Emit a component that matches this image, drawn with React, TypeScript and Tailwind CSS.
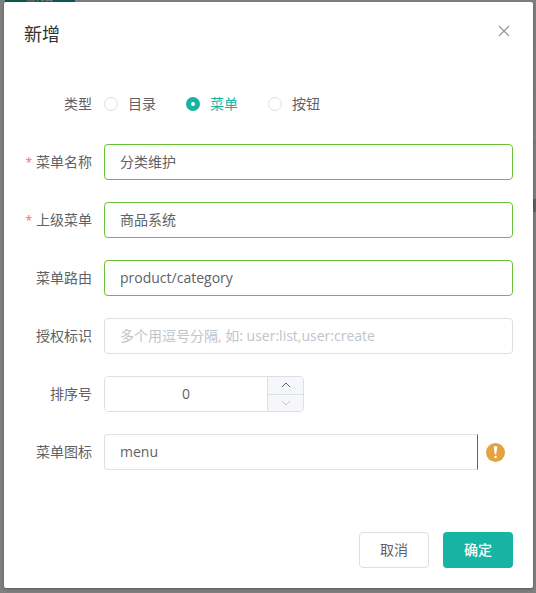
import { useState } from "react";
import type { ReactNode } from "react";

const FIELD =
  "h-9 w-full min-w-0 border bg-white px-[15px] pb-[2px] text-sm text-[#606266] outline-none placeholder:text-[#c0c4cc]";

function Row({ label, id, required, children }: { label: string; id: string; required?: boolean; children: ReactNode }) {
  return (
    <div className="flex items-center">
      <label htmlFor={id} className="w-20 shrink-0 pr-3 text-right leading-9 whitespace-nowrap">
        {required && <span className="mr-1 text-xs text-[#f56c6c]">*</span>}
        {label}
      </label>
      <div className="flex h-9 min-w-0 flex-1 items-center">{children}</div>
    </div>
  );
}

function Chevron({ down }: { down?: boolean }) {
  return (
    <svg width="10" height="6" viewBox="0 0 10 6" fill="none" stroke="currentColor" strokeWidth="1" aria-hidden="true">
      <path d={down ? "M1 1l4 4 4-4" : "M1 5l4-4 4 4"} />
    </svg>
  );
}

function Backdrop() {
  return (
    <div aria-hidden="true" className="absolute inset-0 overflow-hidden bg-[#7f7f7f]">
      <div className="absolute -top-[21px] left-[5px] h-9 w-[70px] rounded bg-[#0b5a52] text-center leading-9 text-[#7f7f7f]">
        新增
      </div>
      <div className="absolute top-[46px] right-0 h-px w-4 bg-[#757677]" />
      <div className="absolute top-[91px] right-0 h-px w-4 bg-[#757677]" />
      <div className="absolute top-[143px] right-0 h-px w-4 bg-[#757677]" />
      <div className="absolute top-[199px] right-0 h-[13px] w-4 bg-[#606060]" />
    </div>
  );
}

export default function App() {
  const [kind, setKind] = useState("菜单");
  const [order, setOrder] = useState(0);

  return (
    <div className="relative min-h-screen pt-[2px] pr-[3px] pb-[5px] pl-1 font-['Open_Sans','Noto_Sans_CJK_SC',sans-serif] text-sm text-[#606266]">
      <Backdrop />
      <form
        role="dialog"
        aria-labelledby="dialog-title"
        onSubmit={(e) => e.preventDefault()}
        className="relative rounded-xs bg-white shadow-[0_1px_3px_rgba(0,0,0,0.3)]"
      >
        <header className="flex items-start justify-between px-5 pt-5 pb-[10px]">
          <h2 id="dialog-title" className="text-lg leading-6 text-[#303133]">
            新增
          </h2>
          <button type="button" aria-label="关闭" className="flex h-[18px] w-[18px] items-center justify-center text-[#909399]">
            <svg width="12" height="12" viewBox="0 0 12 12" fill="none" stroke="currentColor" strokeWidth="1.1">
              <path d="M1 1l10 10M11 1L1 11" />
            </svg>
          </button>
        </header>

        <div className="flex flex-col gap-[22px] px-5 pt-[30px] pb-[52px]">
          <Row label="类型" id="kind-目录">
            <div className="flex gap-[30px]">
              {["目录", "菜单", "按钮"].map((name) => (
                <label
                  key={name}
                  htmlFor={"kind-" + name}
                  className="flex items-center gap-[10px] whitespace-nowrap has-checked:text-[#17b3a3]"
                >
                  <input
                    id={"kind-" + name}
                    type="radio"
                    name="kind"
                    checked={kind === name}
                    onChange={() => setKind(name)}
                    className="h-[14px] w-[14px] appearance-none rounded-full border border-[#dcdfe6] bg-white checked:border-5 checked:border-[#17b3a3]"
                  />
                  {name}
                </label>
              ))}
            </div>
          </Row>
          <Row label="菜单名称" id="name" required>
            <input id="name" defaultValue="分类维护" className={FIELD + " rounded border-[#67c23a]"} />
          </Row>
          <Row label="上级菜单" id="parent" required>
            <input id="parent" defaultValue="商品系统" readOnly className={FIELD + " rounded border-[#67c23a]"} />
          </Row>
          <Row label="菜单路由" id="route">
            <input id="route" defaultValue="product/category" className={FIELD + " rounded border-[#67c23a]"} />
          </Row>
          <Row label="授权标识" id="perms">
            <input
              id="perms"
              placeholder="多个用逗号分隔, 如: user:list,user:create"
              className={FIELD + " rounded border-[#dcdfe6]"}
            />
          </Row>
          <Row label="排序号" id="order">
            <div className="flex h-9 w-[200px] overflow-hidden rounded border border-[#dcdfe6]">
              <input
                id="order"
                value={order}
                onChange={(e) => setOrder(Number(e.target.value) || 0)}
                className="min-w-0 flex-1 bg-white text-center outline-none"
              />
              <div className="flex w-9 shrink-0 flex-col border-l border-[#dcdfe6] bg-[#f5f7fa]">
                <button
                  type="button"
                  aria-label="增加"
                  onClick={() => setOrder(order + 1)}
                  className="flex flex-1 items-center justify-center border-b border-[#dcdfe6] text-[#606266]"
                >
                  <Chevron />
                </button>
                <button
                  type="button"
                  aria-label="减少"
                  disabled={order === 0}
                  onClick={() => setOrder(order - 1)}
                  className="flex flex-1 items-center justify-center disabled:text-[#c0c4cc]"
                >
                  <Chevron down />
                </button>
              </div>
            </div>
          </Row>
          <Row label="菜单图标" id="icon">
            <input id="icon" defaultValue="menu" className={FIELD + " rounded-l border-[#dcdfe6] border-r-[#606266]"} />
            <svg width="19" height="19" viewBox="0 0 18 18" className="mx-2 shrink-0" role="img" aria-label="提示">
              <circle cx="9" cy="9" r="9" fill="#e6a23c" />
              <path d="M7.4 4.2a1.6 1.3 0 0 1 3.2 0L9.7 10.6H8.3z" fill="#fff" />
              <circle cx="9" cy="13.2" r="1.2" fill="#fff" />
            </svg>
          </Row>
        </div>

        <footer className="flex justify-end gap-[14px] px-5 pt-[10px] pb-5">
          <button type="button" className="h-9 w-[70px] rounded border border-[#dcdfe6] bg-white">
            取消
          </button>
          <button type="submit" className="h-9 w-[70px] rounded bg-[#17b3a3] font-medium text-white">
            确定
          </button>
        </footer>
      </form>
    </div>
  );
}
